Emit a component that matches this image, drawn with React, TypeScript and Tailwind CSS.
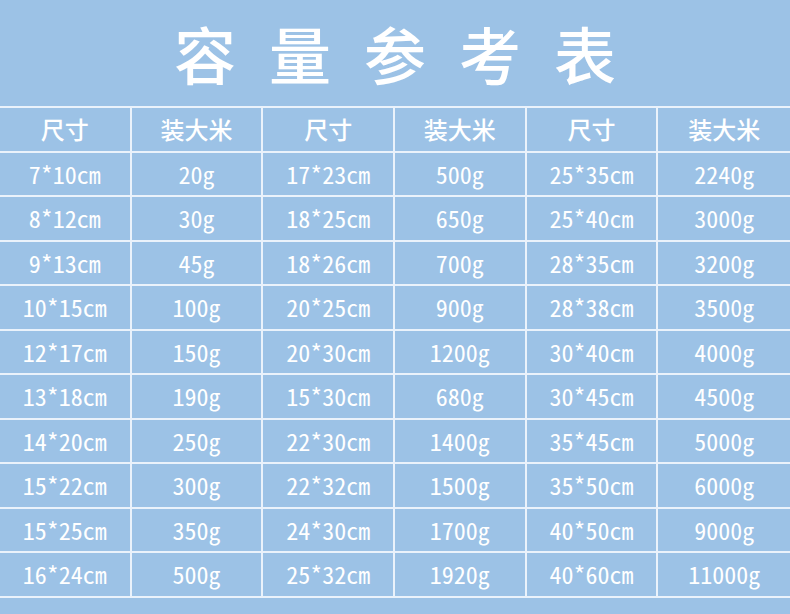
const headers = ["尺寸", "装大米", "尺寸", "装大米", "尺寸", "装大米"];

const rows: string[][] = [
  ["7*10cm", "20g", "17*23cm", "500g", "25*35cm", "2240g"],
  ["8*12cm", "30g", "18*25cm", "650g", "25*40cm", "3000g"],
  ["9*13cm", "45g", "18*26cm", "700g", "28*35cm", "3200g"],
  ["10*15cm", "100g", "20*25cm", "900g", "28*38cm", "3500g"],
  ["12*17cm", "150g", "20*30cm", "1200g", "30*40cm", "4000g"],
  ["13*18cm", "190g", "15*30cm", "680g", "30*45cm", "4500g"],
  ["14*20cm", "250g", "22*30cm", "1400g", "35*45cm", "5000g"],
  ["15*22cm", "300g", "22*32cm", "1500g", "35*50cm", "6000g"],
  ["15*25cm", "350g", "24*30cm", "1700g", "40*50cm", "9000g"],
  ["16*24cm", "500g", "25*32cm", "1920g", "40*60cm", "11000g"],
];

function Cell({ text, last, head }: { text: string; last: boolean; head?: boolean }) {
  return (
    <div
      className={`flex h-[44.5px] items-center justify-center border-b-2 border-[#eaf2fb] ${
        last ? "" : "border-r-2"
      } ${
        head
          ? "font-['Noto_Sans_CJK_SC',sans-serif] text-[24px] font-medium"
          : "font-['Noto_Sans_Mono_CJK_SC','Liberation_Mono',monospace] text-[24px]"
      }`}
    >
      {text}
    </div>
  );
}

export default function App() {
  return (
    <div className="h-[614px] w-[790px] overflow-hidden bg-[#9cc2e6] text-white">
      <div className="flex h-[106px] items-center justify-center pl-[33px]">
        <h1 className="font-['Noto_Sans_CJK_SC',sans-serif] text-[62px] font-medium leading-none tracking-[33px]">
          容量参考表
        </h1>
      </div>
      <div className="grid grid-cols-6 border-t-2 border-[#eaf2fb]">
        {headers.map((h, i) => (
          <Cell key={"h" + i} text={h} head last={i === 5} />
        ))}
        {rows.map((r, ri) =>
          r.map((c, ci) => <Cell key={ri + "-" + ci} text={c} last={ci === 5} />)
        )}
      </div>
    </div>
  );
}
